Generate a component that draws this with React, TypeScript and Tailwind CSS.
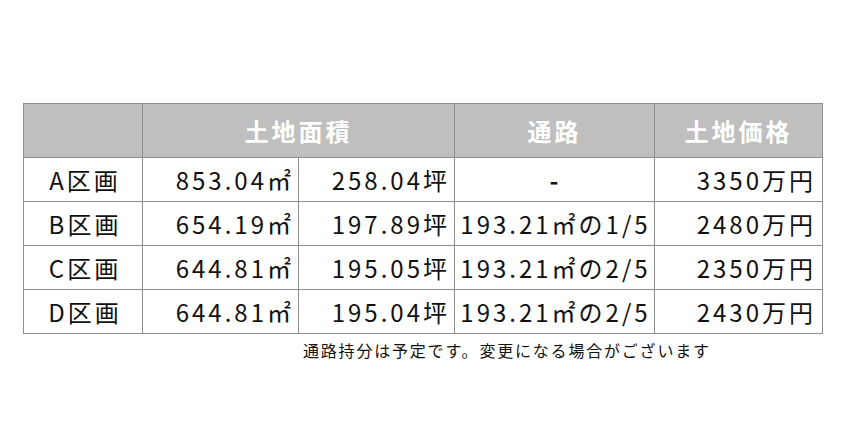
const ROWS = [
  { name: "A区画", sqm: "853.04㎡", tsubo: "258.04坪", road: "-", price: "3350万円" },
  { name: "B区画", sqm: "654.19㎡", tsubo: "197.89坪", road: "193.21㎡の1/5", price: "2480万円" },
  { name: "C区画", sqm: "644.81㎡", tsubo: "195.05坪", road: "193.21㎡の2/5", price: "2350万円" },
  { name: "D区画", sqm: "644.81㎡", tsubo: "195.04坪", road: "193.21㎡の2/5", price: "2430万円" },
];

const cell = "flex h-[43px] items-center bg-white text-[24px] text-[#111] tracking-[3px]";
const head = "flex h-[53px] items-center justify-center bg-[#bfbfbf] text-[24px] font-bold tracking-[3px] text-white";

export default function App() {
  return (
    <div className="min-h-[424px] w-[850px] bg-white pl-[23px] pt-[103px] font-['Noto_Sans_CJK_JP',sans-serif]">
      <div className="grid w-[800px] grid-cols-[118px_155px_155px_199px_167px] gap-px bg-[#8e8e8e] p-px">
        <div className={head} />
        <div className={`${head} col-span-2`}>土地面積</div>
        <div className={head}>通路</div>
        <div className={head}>土地価格</div>
        {ROWS.map((r) => (
          <>
            <div key={r.name} className={`${cell} justify-center pl-[4px]`}>{r.name}</div>
            <div className={`${cell} justify-end pr-[4px]`}>{r.sqm}</div>
            <div className={`${cell} justify-end pr-[4px]`}>{r.tsubo}</div>
            <div className={`${cell} justify-center pl-[2px] tracking-[2.5px]`}>{r.road === "-" ? <span className="font-bold">-</span> : r.road}</div>
            <div className={`${cell} justify-end pr-[6px]`}>{r.price}</div>
          </>
        ))}
      </div>
      <p className="mt-[4px] pl-[280px] text-[16px] leading-6 tracking-[1.8px] text-[#111]">
        通路持分は予定です。変更になる場合がございます
      </p>
    </div>
  );
}
